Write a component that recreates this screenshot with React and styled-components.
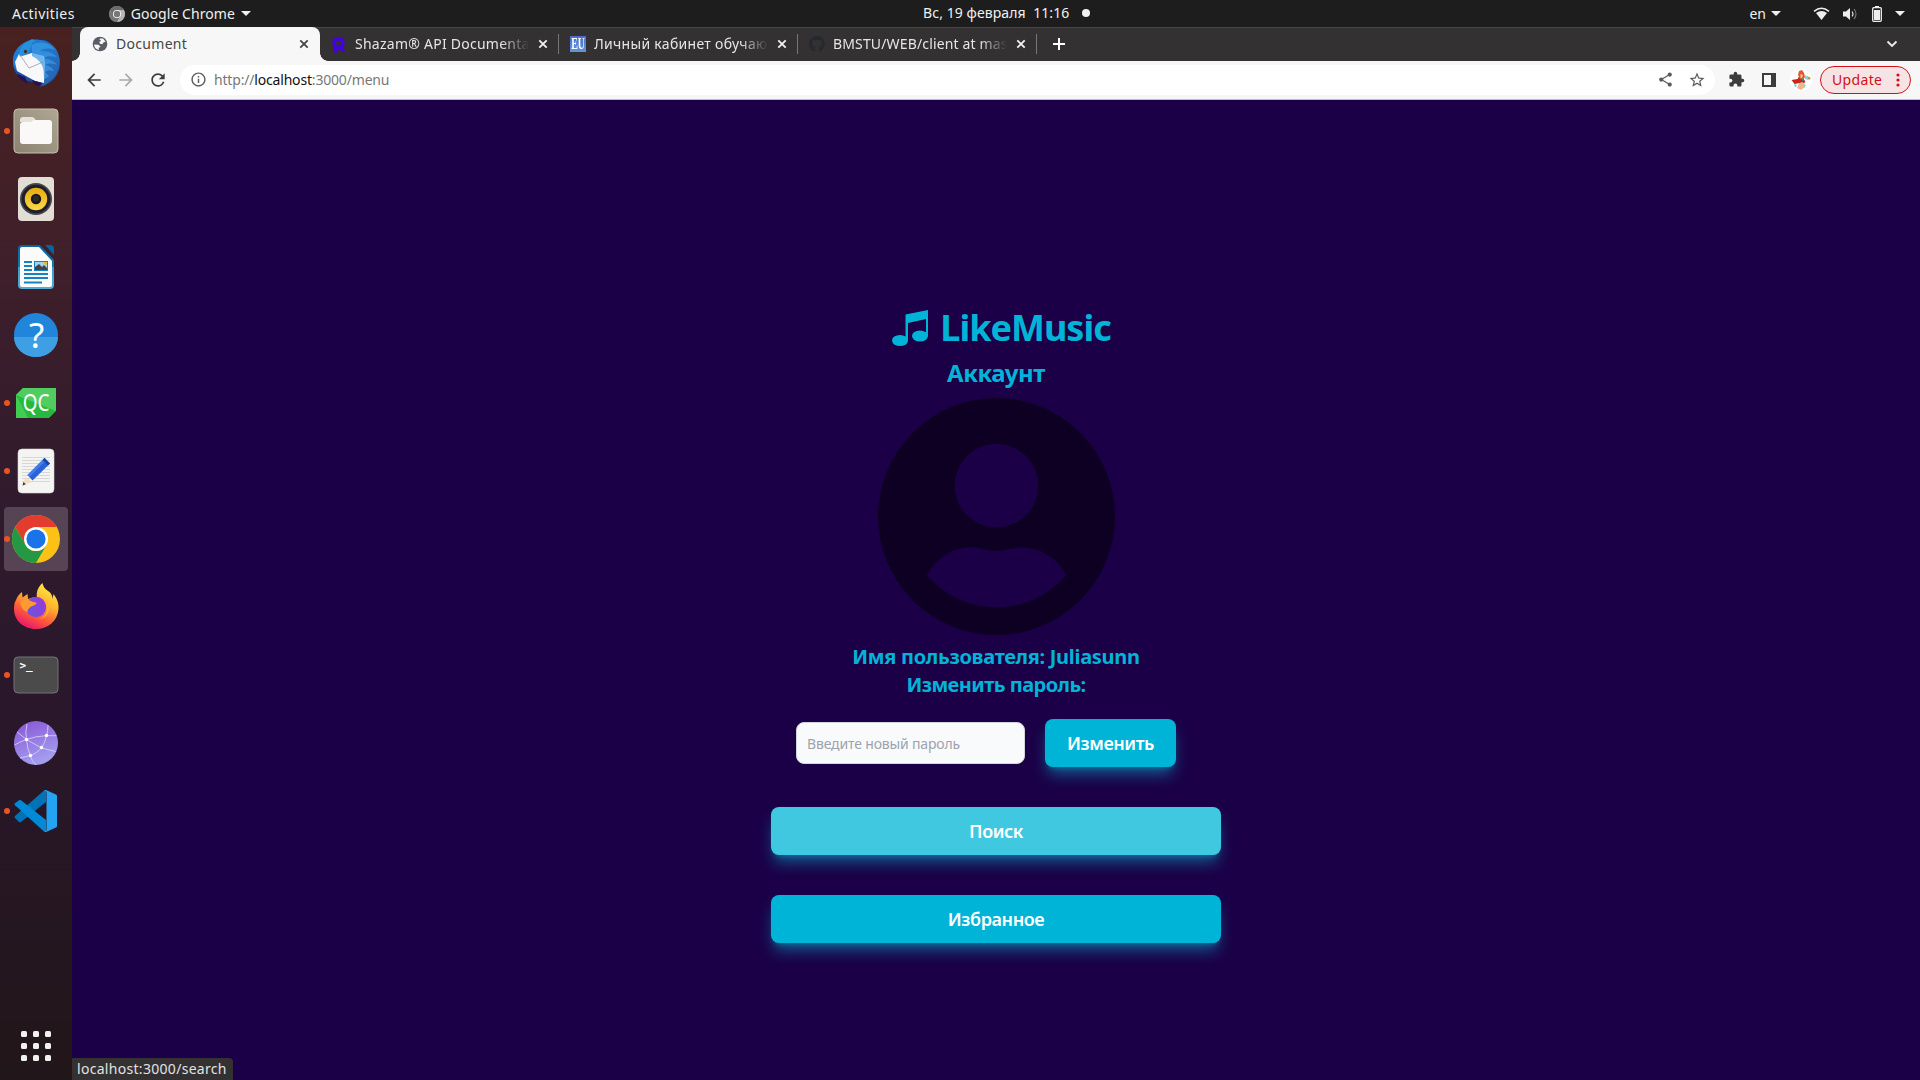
import React from "react";
import styled, { createGlobalStyle, css } from "styled-components";
import { FaGithub } from "react-icons/fa";
import { MdArrowBack, MdArrowForward, MdRefresh, MdShare, MdStarBorder, MdExtension, MdInfoOutline } from "react-icons/md";

const Global = createGlobalStyle`
  * { box-sizing: border-box; }
  body { margin: 0; overflow: hidden; }
  button, input { font: inherit; border: 0; padding: 0; margin: 0; }
`;

const Desktop = styled.div`
  width: 1920px;
  height: 1080px;
  display: grid;
  grid-template-rows: 27px 1fr;
  background: #1b0047;
  font-family: "Noto Sans", "Open Sans", sans-serif;
`;

const Label = styled.span`
  white-space: nowrap;
  letter-spacing: ${(p) => p.$track || 0}px;
`;

/* ---------- system bar ---------- */
const SystemBar = styled.header`
  display: grid;
  grid-template-columns: 1fr auto 1fr;
  background: #1d1d1d;
  color: #f0f0ef;
  font-size: 14px;
  line-height: 26px;
`;
const BarSide = styled.div`
  display: flex;
  align-items: center;
  justify-content: ${(p) => (p.$end ? "flex-end" : "flex-start")};
  padding: ${(p) => (p.$end ? "0 15px 0 0" : "0 0 0 12px")};
`;
const AppMenu = styled.div`
  display: flex;
  align-items: center;
  gap: 6px;
  margin-left: 34px;
`;
const Clock = styled.div`
  display: flex;
  align-items: center;
  justify-content: space-between;
  width: 167px;
  margin-left: 93px;
  padding-bottom: 1px;
`;
const Dot = styled.i`
  width: 8px;
  height: 8px;
  border-radius: 50%;
  background: #f0f0ef;
`;
const Caret = styled.i`
  border: 5px solid transparent;
  border-top-color: #f0f0ef;
  border-bottom: 0;
`;
const Tray = styled.div`
  display: flex;
  align-items: center;
  gap: 13px;
  margin-left: 32px;
`;
const Lang = styled.div`
  display: flex;
  align-items: center;
  gap: 5px;
`;

/* ---------- dock ---------- */
const Workspace = styled.div`
  display: flex;
  min-height: 0;
`;
const Dock = styled.nav`
  width: 72px;
  display: flex;
  flex-direction: column;
  align-items: center;
  justify-content: space-between;
  padding: 4px 4px 19px;
  background: linear-gradient(#48211f 0, #41202a 200px, #301a2d 480px, #2a172b 680px, #211619 100%);
`;
const DockList = styled.div`
  display: flex;
  flex-direction: column;
  gap: 4px;
`;
const DockItem = styled.div`
  position: relative;
  width: 64px;
  height: 64px;
  display: grid;
  place-items: center;
  border-radius: 4px;
  background: ${(p) => (p.$active ? "#564454" : "transparent")};
  ${(p) =>
    p.$running &&
    css`
      &::before {
        content: "";
        position: absolute;
        left: 0;
        top: 29px;
        width: 6px;
        height: 6px;
        border-radius: 50%;
        background: #e95420;
      }
    `}
`;
const AppsGrid = styled.div`
  display: grid;
  grid-template-columns: repeat(3, 6px);
  grid-auto-rows: 6px;
  gap: 6px;
  i { background: #f2f1ee; border-radius: 1.5px; }
`;

/* ---------- browser ---------- */
const Browser = styled.main`
  position: relative;
  width: 1848px;
  display: flex;
  flex-direction: column;
`;
const TabStrip = styled.div`
  height: 34px;
  display: flex;
  align-items: stretch;
  padding: 0 22px 0 8px;
  background: #333132;
  border-top: 1px solid #484647;
`;
const Tab = styled.div`
  position: relative;
  width: ${(p) => (p.$active ? 240 : 239)}px;
  display: flex;
  align-items: center;
  padding: ${(p) => (p.$active ? "0 10px 0 12px" : "0 10px 0 11px")};
  gap: 8px;
  font-size: 14px;
  color: ${(p) => (p.$active ? "#454545" : "#e6e6e6")};
  ${(p) =>
    p.$active
      ? css`
          margin-top: -1px;
          background: #f7f7f7;
          border-radius: 8px 8px 0 0;
          &::before, &::after {
            content: "";
            position: absolute;
            bottom: 0;
            width: 8px;
            height: 8px;
          }
          &::before { left: -8px; background: radial-gradient(circle at 0 0, transparent 7.5px, #f7f7f7 8px); }
          &::after { right: -8px; background: radial-gradient(circle at 100% 0, transparent 7.5px, #f7f7f7 8px); }
        `
      : css`
          padding-bottom: 1px;
          background: linear-gradient(#777, #777) right 6px / 1px 20px no-repeat;
        `}
`;
const Favicon = styled.span`
  width: 16px;
  height: 16px;
  display: grid;
  place-items: center;
  flex: none;
`;
const EuIcon = styled(Favicon)`
  display: flex;
  justify-content: center;
  background: linear-gradient(#4b6cc8, #5f97dc);
  color: #fff;
  font: bold 16px/16px "Liberation Serif", serif;
  span { transform: scaleX(.62); }
`;
const TabTitle = styled.span`
  flex: 1;
  min-width: 0;
  white-space: nowrap;
  line-height: 20px;
  margin-top: -1px;
  letter-spacing: ${(p) => p.$track || 0}px;
  ${(p) => p.$fade && css`
    mask-image: linear-gradient(90deg, #000 84%, transparent 100%);
  `}
`;
const NewTab = styled.div`
  width: 44px;
  display: grid;
  place-items: center;
  padding-bottom: 1px;
`;
const TabMenu = styled.div`
  margin-left: auto;
  display: flex;
  align-items: center;
  padding-bottom: 1px;
`;
const Toolbar = styled.div`
  height: 39px;
  display: flex;
  align-items: center;
  padding: 0 9px 1px 12px;
  background: #f7f7f7;
  border-bottom: 1px solid #bfbdc6;
  color: #3c3c3c;
`;
const NavButton = styled.span`
  width: 20px;
  height: 20px;
  margin-right: 12px;
  display: grid;
  place-items: center;
  color: ${(p) => (p.$off ? "#a9a9a9" : "#3c3c3c")};
`;
const Omnibox = styled.div`
  width: 1535px;
  height: 30px;
  display: flex;
  align-items: center;
  padding: 0 9px 0 10px;
  border-radius: 15px;
  background: #fff;
  color: #5a5a5a;
  font-size: 14px;
`;
const Url = styled.span`
  flex: 1;
  margin-left: 7px;
  letter-spacing: ${(p) => p.$track}px;
  color: #777;
  b { font-weight: 400; color: #111; }
`;
const OmniActions = styled.span`
  display: flex;
  gap: 14px;
`;
const Extensions = styled.div`
  display: flex;
  align-items: center;
  gap: 17px;
  margin-left: 13px;
`;
const ProfileButton = styled.span`
  display: flex;
  margin-left: -3px;
`;
const UpdateButton = styled.button`
  width: 91px;
  height: 28px;
  margin-left: auto;
  display: flex;
  align-items: center;
  justify-content: space-between;
  padding: 0 10px 0 11px;
  border: 1px solid #d50f17;
  border-radius: 14px;
  background: #f6e4e5;
  color: #d50f17;
  font-size: 14px;
`;

/* ---------- page ---------- */
const Page = styled.section`
  flex: 1;
  display: flex;
  flex-direction: column;
  align-items: center;
  padding-top: 205px;
  background: #1b0047;
  color: #00b4d8;
`;
const Brand = styled.div`
  height: 46px;
  display: flex;
  align-items: center;
  gap: 11px;
  margin-left: 11px;
`;
const BrandName = styled.h1`
  margin: 0;
  font-size: 36px;
  line-height: 46px;
  font-weight: 700;
  letter-spacing: ${(p) => p.$track}px;
`;
const Subtitle = styled.h2`
  margin: 6px 0 9px;
  font-size: 24px;
  line-height: 32px;
  font-weight: 700;
  letter-spacing: ${(p) => p.$track}px;
`;
const AvatarBox = styled.div`
  margin-bottom: 8px;
`;
const InfoLine = styled.p`
  margin: 0;
  font-size: 20px;
  line-height: 28px;
  font-weight: 700;
  letter-spacing: ${(p) => p.$track}px;
`;
const PasswordForm = styled.div`
  display: flex;
  align-items: center;
  gap: 20px;
  margin: 20px 20px 40px 0;
`;
const PasswordInput = styled.input`
  width: 229px;
  height: 42px;
  padding: 0 10px;
  border: 1px solid #d1d5db;
  border-radius: 8px;
  background: #f9fafb;
  font-size: 14px;
  letter-spacing: -0.16px;
  &::placeholder { color: #9ca3af; opacity: 1; }
`;
const ActionButton = styled.button`
  width: ${(p) => p.$width}px;
  height: 48px;
  border-radius: 8px;
  background: ${(p) => (p.$hover ? "#40c8e0" : "#00b4d8")};
  color: #fff;
  font-size: 18px;
  font-weight: 600;
  letter-spacing: -0.42px;
  box-shadow: 0 10px 15px -3px rgba(6, 182, 212, .5), 0 4px 6px -4px rgba(6, 182, 212, .5);
`;
const ButtonStack = styled.div`
  display: flex;
  flex-direction: column;
  gap: 40px;
`;
const StatusBubble = styled.div`
  position: absolute;
  left: 0;
  bottom: 0;
  width: 161px;
  height: 22px;
  padding-left: 5px;
  background: #333132;
  border-top-right-radius: 4px;
  color: #e2e2e2;
  font-size: 14px;
  line-height: 21px;
`;

/* ---------- drawings ---------- */
const Drawing = styled.svg`
  display: block;
`;
const Svg = ({ s = 48, children }) => (
  <Drawing width={s} height={s} viewBox={`0 0 ${s} ${s}`}>{children}</Drawing>
);

const Thunderbird = () => (
  <Svg>
    <defs><linearGradient id="tb" x1="0" y1="0" x2="1" y2="1"><stop offset="0" stopColor="#1b7fd6" /><stop offset=".5" stopColor="#2176c9" /><stop offset="1" stopColor="#2b5ea8" /></linearGradient></defs>
    <path d="M1 22C2 10 11 2 22 0l3 1h8c9 4 15 13 15 23 0 10-6 19-15 22l-5 2 2-4C12 43 3 38 1 26z" fill="#1c4fa3" />
    <path d="M1 23C0 12 9 3 20 1c8-2 19 2 24 9 5 8 5 19-1 27-3 4-8 8-13 10l4-7-24-6C4 32 1 28 1 23z" fill="url(#tb)" />
    <path d="M10 17L20 14l12 3 1 8-1 19-9-2L5 32l-2-9 4-8z" fill="#f8f8fa" />
    <path d="M5 35l8 3 3 7C10 42 6 39 5 35zM20 41l10 3-3 3c-3 0-6-3-7-6z" fill="#25105a" />
    <path d="M8 16l9 13 14-6" fill="none" stroke="#a5a5ac" strokeWidth=".9" />
    <path d="M8 18c-2-6 1-12 7-15l5-3 4 2c-4 1-5 3-4 5-3 2-1 7-7 8-3 1-4 1-5 3z" fill="#278fdc" />
    <path d="M20 6c9-5 18-2 23 5-6-2-10-2-15 1 8 0 13 2 17 6-7-1-10-1-14 1 6 1 11 3 14 7-5-2-9-2-12 0 5 1 8 3 9 6-4-1-6-1-9 1l4 4-5 4c0-10 0-18-12-24z" fill="#3a9ae6" opacity=".7" />
    <circle cx="13.5" cy="12.5" r="1.7" fill="#4a2a2a" />
  </Svg>
);
const Files = () => (
  <Svg>
    <defs><linearGradient id="fl" x1="0" y1="1" x2="1" y2="0"><stop offset="0" stopColor="#8b8370" /><stop offset="1" stopColor="#aea794" /></linearGradient></defs>
    <rect x="2" y="2" width="44" height="44" rx="4" fill="url(#fl)" stroke="#c5bfae" strokeWidth="1" />
    <path d="M8 13q0-3 3-3h9q2 0 3 2l2 3H8z" fill="#e4e1d8" />
    <path d="M8 18q0-3 3-3h8l3-2h15q3 0 3 3v18q0 3-3 3H11q-3 0-3-3z" fill="#faf9f7" />
  </Svg>
);
const Rhythmbox = () => (
  <Svg>
    <defs><linearGradient id="rb" x1="0" y1="0" x2="0" y2="1"><stop offset="0" stopColor="#e7ab0c" /><stop offset="1" stopColor="#fbd84c" /></linearGradient></defs>
    <rect x="6" y="2" width="36" height="44" rx="4" fill="#e3ded5" />
    <circle cx="24" cy="24" r="16" fill="#45454e" /><circle cx="24" cy="24" r="14.3" fill="#1e1f29" />
    <circle cx="24" cy="24" r="11.2" fill="url(#rb)" /><circle cx="24" cy="24" r="5.2" fill="#191919" /><circle cx="24" cy="23.5" r="3" fill="#2b2b2b" />
  </Svg>
);
const Writer = () => (
  <Svg>
    <defs><linearGradient id="wr" x1="0" y1="0" x2="0" y2="1"><stop offset="0" stopColor="#0c649c" /><stop offset=".5" stopColor="#1277b0" /><stop offset=".5" stopColor="#369bcb" /><stop offset="1" stopColor="#52acd5" /></linearGradient></defs>
    <path d="M10 2h18l14 15v25q0 4-4 4H10q-4 0-4-4V6q0-4 4-4z" fill="url(#wr)" />
    <path d="M33 2h5q4 0 4 4v6z" fill="#08659c" />
    <path d="M10 4h17l13 14v24q0 2-2 2H10q-2 0-2-2V6q0-2 2-2z" fill="#fbfbfb" />
    <path d="M12 19h8M12 23h8M12 27h8M12 31h24M12 35h24M12 39.500h18" stroke="#1583be" strokeWidth="1.8" />
    <rect x="22.500" y="18.500" width="13" height="9" fill="#9ed4ef" stroke="#1583be" />
    <path d="M23 27v-3l4-3 3 3 2-2 3 3v2z" fill="#444" /><rect x="32" y="19" width="3" height="2.500" fill="#eab93a" />
  </Svg>
);
const HelpText = styled.text`
  font: ${(p) => p.$size}px "Noto Sans", sans-serif;
  fill: #fff;
  text-anchor: middle;
`;
const Help = () => (
  <Svg>
    <circle cx="24" cy="24" r="22" fill="#2285dc" /><path d="M2 26a22 20 0 0 0 44 0z" fill="#3f9fe5" />
    <HelpText x="24.500" y="36.500" $size={35}>?</HelpText>
  </Svg>
);
const QtCreator = () => (
  <Svg>
    <path d="M11 9h33v23l-7 7H4V16z" fill="#27b93d" /><path d="M11 9h33v23L4 16z" fill="#51cc61" /><path d="M4 16v23h12z" fill="#41cd52" />
    <g transform="translate(24 32) scale(.82 1)"><HelpText x="0" y="0" $size={23}>QC</HelpText></g>
  </Svg>
);
const Editor = () => (
  <Svg>
    <rect x="6" y="2" width="36" height="44" rx="4" fill="#f4f4f3" stroke="#d6d6d4" strokeWidth=".6" />
    <path d="M10 10.500h28M10 13.500h28M10 16.500h28M10 19.500h28M10 22.500h28M10 25.500h28M10 28.500h28M10 31.500h28M10 34.500h28" stroke="#cfcfcf" strokeWidth=".8" />
    <path d="M10.500 38.500l3-9 6 5.500z" fill="#f3dcc1" /><path d="M10.500 38.500l1-3.500 2.200 2.200z" fill="#333" />
    <path d="M15.500 28l17-17 5.500 5.500-17.500 17z" fill="#2a62d8" /><path d="M15.500 28l17-17 2 2-17 17z" fill="#447de8" /><path d="M30.500 13l5.500 5.500 2-2-5.500-5.500z" fill="#1a46a8" />
  </Svg>
);
const Chrome = ({ s = 48, mono }) => (
  <Drawing width={s} height={s} viewBox="0 0 48 48">
    <circle cx="24" cy="24" r="24" fill={mono ? "#8c8c8c" : "#fbc116"} />
    <path d="M3.220 12A24 24 0 0 1 44.780 12H24L13.600 30z" fill={mono ? "#6c6c6c" : "#e33b2e"} />
    <path d="M3.220 12A24 24 0 0 0 24 48L34.400 30A12 12 0 0 1 13.600 30z" fill={mono ? "#777" : "#259846"} />
    {mono && <path d="M24 48A24 24 0 0 0 44.780 12H24L34.400 30z" fill="#b5b5b5" />}
    <circle cx="24" cy="24" r="12" fill="#fff" /><circle cx="24" cy="24" r="9.600" fill={mono ? "#777" : "#1a73e8"} />
  </Drawing>
);
const Firefox = () => (
  <Svg>
    <defs>
      <linearGradient id="ff" x1=".8" y1="0" x2=".3" y2="1"><stop offset="0" stopColor="#fff04b" /><stop offset=".4" stopColor="#ffb52e" /><stop offset=".7" stopColor="#ff5a38" /><stop offset="1" stopColor="#e6136f" /></linearGradient>
      <linearGradient id="fp" x1="0" y1=".6" x2="1" y2="0"><stop offset="0" stopColor="#6a55dc" /><stop offset="1" stopColor="#a035d8" /></linearGradient>
    </defs>
    <path d="M4 17c1-3 3-6 6-8l.5 5.500 5-3.500.5 5c3-1 6-2 9-1-1-6 1-11 5.500-15 1 5 3 6 7 9 2 2 3 4 3 7l1-5c4 5 5.500 10 5 15-1 12-10 20-22.500 20C11 46 2 37 2 26c0-4 .5-7 2-9z" fill="url(#ff)" />
    <circle cx="24" cy="24" r="10.200" fill="url(#fp)" />
    <path d="M8 19c4-3 8-3 12-.5 2 1 4 .5 4.500 1.500 0 2-5 3-6 4-2 1-3 3-3 5-4-1-6-4-7.500-10z" fill="#ff9a30" />
    <path d="M30 15c6 2 9 8 7 13-2 5-6 8-11 8 6-1 9-5 9-10 0-4-2-8-5-11z" fill="#ffb32c" />
  </Svg>
);
const TerminalText = styled.text`font: bold 11px "DejaVu Sans Mono", monospace; fill: #fff;`;
const Terminal = () => (
  <Svg>
    <rect x="2" y="6" width="44" height="36" rx="4" fill="#4b4b4b" stroke="#737373" />
    <TerminalText x="7.500" y="18">&gt;_</TerminalText>
  </Svg>
);
const Globe = () => (
  <Svg>
    <defs><linearGradient id="gl" x1="0" y1="0" x2=".4" y2="1"><stop offset="0" stopColor="#8753d6" /><stop offset="1" stopColor="#a39dee" /></linearGradient></defs>
    <circle cx="24" cy="24" r="22" fill="url(#gl)" />
    <g fill="none" stroke="#d6cbf6" strokeWidth=".9">
      <path d="M15 5q-2 8-.5 15.500Q15 29 18.500 37 20 43 24 46M36 6q0 6-1.500 11Q33 24 29.500 29 25 34 18.500 37M2.500 26q5-3 12-5.500Q24 17 34.500 16.700h10M5 13l9.500 7.500L29.500 29l14 3.500M8 39l10.500-2.500" />
    </g>
    <g fill="#fff"><circle cx="14.500" cy="20.500" r="1.700" /><circle cx="34.500" cy="16.500" r="1.700" /><circle cx="29.500" cy="28.500" r="1.700" /><circle cx="18.500" cy="36.500" r="1.700" /></g>
  </Svg>
);
const Code = () => (
  <Svg>
    <path d="M34 3v12L9 35q-1 .6-2 0l-4-4q-1-1 0-2L32 3.500z" fill="#0073b7" />
    <path d="M34 45V33L9 13.300q-1-.6-2 0l-4 3q-1 1 0 2L32 44.500z" fill="#0089d7" />
    <path d="M34 3l10 4.500q1 .6 1 1.500v30q0 1-1 1.500L34 45q-1.500.3-2.500-.7 3 1 3-1.700V5.500q0-2.500-3-1.800 1-1 2.500-.7z" fill="#24a3f2" />
  </Svg>
);
const Close = ({ c }) => (
  <svg width="12" height="12" viewBox="0 0 12 12"><path d="M2.300 2.300l7.400 7.400M9.700 2.300L2.300 9.700" stroke={c} strokeWidth="1.800" /></svg>
);
const DocGlobe = () => (
  <svg width="16" height="16" viewBox="0 0 16 16"><circle cx="8" cy="8" r="7.300" fill="#5a5d66" /><path d="M2 8.500l4.500.2 2 1.800-1.700 1.500v2Q2.500 13 2 8.500zM8 2.500h3l2.600 3.200-2 .6-1.300 2-2.300-.5-.8-1.800 2-1.200-1.700-1z" fill="#f7f7f7" /></svg>
);
const RapidIcon = () => (
  <svg width="16" height="18" viewBox="0 0 16 18"><circle cx="7.500" cy="7" r="4.400" fill="none" stroke="#4400e0" strokeWidth="3.600" /><path d="M2.500 8l-.7 8 4.200.5 1-5zM7 11l3.500 4.500 4 .3-1.300-2.200-2.700-2.600z" fill="#4400e0" /></svg>
);
const Wifi = () => (
  <svg width="17" height="14" viewBox="0 0 17 14"><path d="M1 4.300Q8.500-1.800 16 4.300" fill="none" stroke="#eee" strokeWidth="1.500" /><path d="M3 6Q8.500 2 14 6l-5.500 7z" fill="#eee" /></svg>
);
const Volume = () => (
  <svg width="16" height="14" viewBox="2 0 16 14"><path d="M1.800 4.500h3.200L9 1v12L5 9.500H1.800z" fill="#eee" /><path d="M11 4.500q2 2.500 0 5" fill="none" stroke="#ddd" strokeWidth="1.200" /><path d="M13 2q4 5 0 10" fill="none" stroke="#777" strokeWidth="1.200" /></svg>
);
const Battery = () => (
  <svg width="10" height="16" viewBox="0 0 10 16"><path d="M3 0h4v2H3z" fill="#eee" /><rect x=".7" y="1.700" width="8.600" height="13.600" rx="1" fill="none" stroke="#eee" strokeWidth="1.300" /><rect x="2" y="4" width="6" height="10" fill="#eee" /></svg>
);
const Profile = () => (
  <svg width="22" height="22" viewBox="0 0 22 22">
    <circle cx="11" cy="11" r="11" fill="#fff" />
    <path d="M1.500 11l6-1 2-3 3 1 3 5-3 2-3-1-5 1z" fill="#c9251d" /><path d="M9 2l3-1 2 3 1 4-2 3-3-1-2-4z" fill="#e5582a" />
    <path d="M10.500 5l2.500 1-1 3h-1.500z" fill="#f6c59a" /><path d="M9 14l4-1 2 5-4 3-4-2z" fill="#f3b48c" />
    <path d="M15 6l5 3-2 2-3-1zM4 15l3 .5-1 3-1.500-1zM13 14l3 2-2 3z" fill="#8fd6cc" /><path d="M11 9l3 1-1 3z" fill="#2395a0" /><path d="M17 7l4 2-2 2z" fill="#b49a4a" />
  </svg>
);
const Note = () => (
  <svg width="37" height="37" viewBox="0 0 37 37" fill="#00b4d8">
    <ellipse cx="8" cy="30.500" rx="8" ry="5.500" /><ellipse cx="28" cy="26" rx="8" ry="5.500" />
    <path d="M13.500 4.500L36 0v26h-2V9L16 13v17.500h-2.500z" />
  </svg>
);
const Avatar = () => (
  <Drawing width="237" height="237" viewBox="0 0 238 238">
    <path fill="#0e0022" fillRule="evenodd" d="M119 0a119 119 0 1 1 0 238a119 119 0 1 1 0-238zM119 46a42 42 0 1 0 0 84a42 42 0 1 0 0-84zM49 178A92 92 0 0 0 189 178A50 50 0 0 0 144 150Q138.500 150 133.500 151.500Q126 153.600 119 153.600Q112 153.600 104.500 151.500Q99.500 150 94 150A50 50 0 0 0 49 178z" />
  </Drawing>
);

const DOCK = [
  { Icon: Thunderbird }, { Icon: Files, running: true }, { Icon: Rhythmbox }, { Icon: Writer }, { Icon: Help },
  { Icon: QtCreator, running: true }, { Icon: Editor, running: true }, { Icon: Chrome, running: true, active: true },
  { Icon: Firefox }, { Icon: Terminal, running: true }, { Icon: Globe }, { Icon: Code, running: true },
];

export default function App() {
  return (
    <Desktop>
      <Global />
      <SystemBar>
        <BarSide>
          <Label $track={0.45}>Activities</Label>
          <AppMenu>
            <Chrome s={16} mono />
            <Label $track={0.05}>Google Chrome</Label>
            <Caret />
          </AppMenu>
        </BarSide>
        <Clock>
          <Label $track={0.08}>Вс, 19 февраля&nbsp; 11:16</Label>
          <Dot />
        </Clock>
        <BarSide $end>
          <Lang><Label>en</Label><Caret /></Lang>
          <Tray><Wifi /><Volume /><Battery /><Caret /></Tray>
        </BarSide>
      </SystemBar>
      <Workspace>
        <Dock>
          <DockList>
            {DOCK.map(({ Icon, running, active }, i) => (
              <DockItem key={i} $running={running} $active={active}><Icon /></DockItem>
            ))}
          </DockList>
          <AppsGrid>{Array.from({ length: 9 }, (_, i) => <i key={i} />)}</AppsGrid>
        </Dock>
        <Browser>
          <TabStrip>
            <Tab $active><Favicon><DocGlobe /></Favicon><TabTitle $track={0.3}>Document</TabTitle><Close c="#454545" /></Tab>
            <Tab><Favicon><RapidIcon /></Favicon><TabTitle $fade $track={0.25}>Shazam® API Documenta</TabTitle><Close c="#f2f2f2" /></Tab>
            <Tab><EuIcon><span>EU</span></EuIcon><TabTitle $fade $track={0.3}>Личный кабинет обучаю</TabTitle><Close c="#f2f2f2" /></Tab>
            <Tab><Favicon><FaGithub size={16} color="#24292f" /></Favicon><TabTitle $fade $track={0.15}>BMSTU/WEB/client at mas</TabTitle><Close c="#f2f2f2" /></Tab>
            <NewTab><svg width="12" height="12" viewBox="0 0 12 12"><path d="M6 0v12M0 6h12" stroke="#fff" strokeWidth="2" /></svg></NewTab>
            <TabMenu><svg width="12" height="8" viewBox="0 0 12 8"><path d="M1.500 1.500L6 6l4.500-4.500" fill="none" stroke="#eee" strokeWidth="1.800" /></svg></TabMenu>
          </TabStrip>
          <Toolbar>
            <NavButton><MdArrowBack size={20} /></NavButton>
            <NavButton $off><MdArrowForward size={20} /></NavButton>
            <NavButton><MdRefresh size={20} /></NavButton>
            <Omnibox>
              <MdInfoOutline size={17} />
              <Url $track={-0.18}>http://<b>localhost</b>:3000/menu</Url>
              <OmniActions><MdShare size={17} /><MdStarBorder size={18} /></OmniActions>
            </Omnibox>
            <Extensions>
              <MdExtension size={17} />
              <svg width="14" height="14" viewBox="0 0 14 14"><path d="M0 0h14v14H0zM2 2v10h7V2z" fill="#3c3c3c" fillRule="evenodd" /></svg>
              <ProfileButton><Profile /></ProfileButton>
            </Extensions>
            <UpdateButton>
              <Label $track={0.35}>Update</Label>
              <svg width="4" height="14" viewBox="0 0 4 14" fill="#d50f17"><circle cx="2" cy="2" r="1.600" /><circle cx="2" cy="7" r="1.600" /><circle cx="2" cy="12" r="1.600" /></svg>
            </UpdateButton>
          </Toolbar>
          <Page>
            <Brand><Note /><BrandName $track={-1}>LikeMusic</BrandName></Brand>
            <Subtitle $track={-0.5}>Аккаунт</Subtitle>
            <AvatarBox><Avatar /></AvatarBox>
            <InfoLine $track={-0.3}>Имя пользователя: Juliasunn</InfoLine>
            <InfoLine $track={-0.55}>Изменить пароль:</InfoLine>
            <PasswordForm>
              <PasswordInput placeholder="Введите новый пароль" />
              <ActionButton $width={131}>Изменить</ActionButton>
            </PasswordForm>
            <ButtonStack>
              <ActionButton $width={450} $hover>Поиск</ActionButton>
              <ActionButton $width={450}>Избранное</ActionButton>
            </ButtonStack>
          </Page>
          <StatusBubble><Label $track={0.3}>localhost:3000/search</Label></StatusBubble>
        </Browser>
      </Workspace>
    </Desktop>
  );
}
